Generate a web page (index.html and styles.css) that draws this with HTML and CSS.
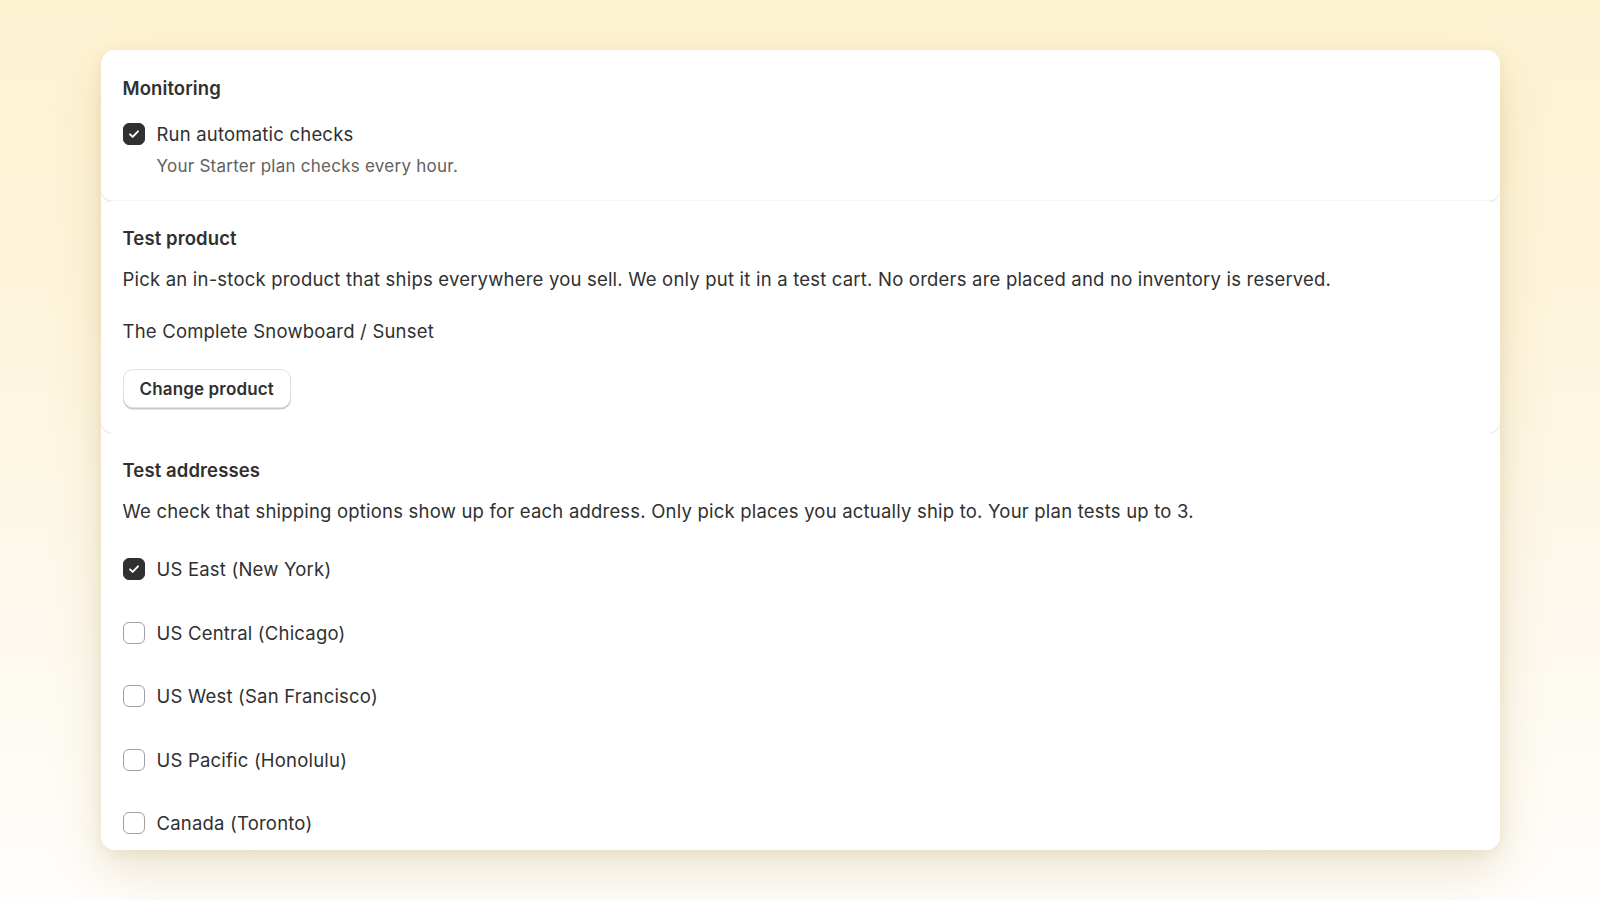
FILE: index.html
```html
<!DOCTYPE html>
<html lang="en">
<head>
<meta charset="utf-8">
<title>Monitoring settings</title>
<link rel="stylesheet" href="styles.css">
</head>
<body>
<main class="card">
  <section class="section s-monitor">
    <h2 class="title">Monitoring</h2>
    <label class="check-row">
      <span class="box checked"><svg viewBox="0 0 20 20" width="16" height="16"><path d="M5 10.4l3.3 3.3L15 6.6" fill="none" stroke="#fff" stroke-width="2.3" stroke-linecap="round" stroke-linejoin="round"/></svg></span>
      <span class="label">Run automatic checks</span>
    </label>
    <p class="help">Your Starter plan checks every hour.</p>
  </section>

  <section class="section s-product">
    <h2 class="title">Test product</h2>
    <p class="desc">Pick an in-stock product that ships everywhere you sell. We only put it in a test cart. No orders are placed and no inventory is reserved.</p>
    <p class="product">The Complete Snowboard / Sunset</p>
    <button class="btn" type="button">Change product</button>
  </section>

  <section class="section s-address">
    <h2 class="title">Test addresses</h2>
    <p class="desc">We check that shipping options show up for each address. Only pick places you actually ship to. Your plan tests up to 3.</p>
    <div class="list">
      <label class="check-row">
        <span class="box checked"><svg viewBox="0 0 20 20" width="16" height="16"><path d="M5 10.4l3.3 3.3L15 6.6" fill="none" stroke="#fff" stroke-width="2.3" stroke-linecap="round" stroke-linejoin="round"/></svg></span>
        <span class="label">US East (New York)</span>
      </label>
      <label class="check-row">
        <span class="box"></span>
        <span class="label">US Central (Chicago)</span>
      </label>
      <label class="check-row">
        <span class="box"></span>
        <span class="label">US West (San Francisco)</span>
      </label>
      <label class="check-row">
        <span class="box"></span>
        <span class="label">US Pacific (Honolulu)</span>
      </label>
      <label class="check-row">
        <span class="box"></span>
        <span class="label">Canada (Toronto)</span>
      </label>
    </div>
  </section>
</main>
</body>
</html>
```

FILE: styles.css
```css
* { box-sizing: border-box; }

html, body {
  margin: 0;
  height: 900px;
}

body {
  font-family: Inter, "Noto Sans", "Liberation Sans", sans-serif;
  color: #303030;
  background: linear-gradient(180deg, #fdf2d2 0%, #fdf5dc 35%, #fdf9ee 70%, #fffefc 100%);
  overflow: hidden;
  padding-top: 50px;
}

.card {
  width: 1399px;
  height: 800px;
  margin: 0 auto;
  background: #ffffff;
  border-radius: 14px;
  overflow: hidden;
  display: flex;
  flex-direction: column;
  box-shadow: 0 24px 50px rgba(190, 160, 90, 0.24), 0 4px 14px rgba(190, 160, 90, 0.18);
}

.section {
  background: #fff;
  border-radius: 12px;
  padding: 24px 22px 24px;
  box-shadow: 0 1px 0 rgba(0, 0, 0, 0.09), 0 0 0 1px rgba(0, 0, 0, 0.03);
  position: relative;
}

.s-monitor { padding-top: 25px; padding-bottom: 21px; }
.s-address { flex: 1; box-shadow: none; }

.title {
  margin: 0;
  font-size: 18.5px;
  line-height: 26px;
  font-weight: 600;
  letter-spacing: 0.1px;
  color: #303030;
}

.check-row {
  display: flex;
  align-items: center;
  gap: 12px;
  height: 28px;
}

.s-monitor .check-row { margin-top: 19px; }

.box {
  width: 22px;
  height: 22px;
  border-radius: 6px;
  border: 1.5px solid #a0a0a0;
  background: #fff;
  display: flex;
  align-items: center;
  justify-content: center;
  flex: none;
}

.box.checked {
  background: #303030;
  border-color: #303030;
}

.label {
  font-size: 18.5px;
  line-height: 28px;
  letter-spacing: 0.2px;
  color: #303030;
}

.help {
  margin: 4px 0 0 34px;
  font-size: 17px;
  line-height: 28px;
  letter-spacing: 0.25px;
  color: #616161;
}

.desc {
  margin: 14px 0 0;
  font-size: 18.5px;
  line-height: 28px;
  letter-spacing: 0.2px;
}

.product {
  margin: 24px 0 0;
  font-size: 18.5px;
  line-height: 28px;
  letter-spacing: 0.2px;
}

.btn {
  margin-top: 24px;
  height: 39px;
  padding: 0 16px;
  font-family: inherit;
  font-size: 17px;
  font-weight: 600;
  letter-spacing: 0.15px;
  color: #303030;
  background: #fff;
  border: 1px solid #e1e1e1;
  border-radius: 10px;
  box-shadow: 0 1.5px 0 #c9c9c9;
  margin-bottom: 1px;
}

.list {
  margin-top: 30px;
  display: flex;
  flex-direction: column;
  gap: 35.5px;
}
```
